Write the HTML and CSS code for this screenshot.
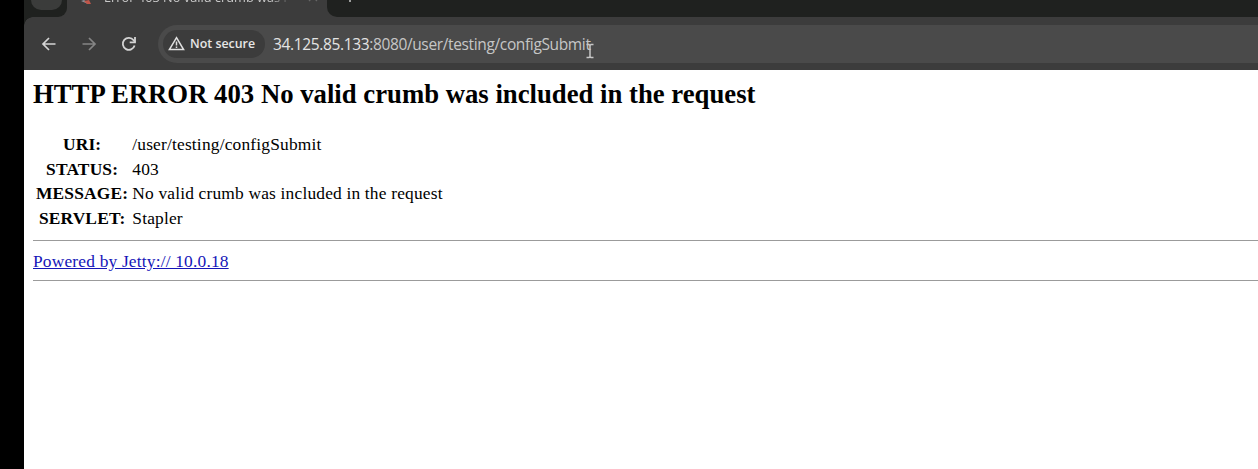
FILE: index.html
```html
<!DOCTYPE html>
<html lang="en">
<head>
<meta charset="utf-8">
<title>Error 403 No valid crumb was included in the request</title>
<link rel="stylesheet" href="styles.css">
</head>
<body>
<div class="window">
  <div class="tabstrip">
    <div class="strip-left"><div class="tab-search"></div></div>
    <div class="tab">
      <svg class="favicon" width="14" height="16" viewBox="0 0 14 16"><path d="M3 2h7v8H3z" fill="#d8b09a"/><path d="M2 12l3-1 5 3-1 1z" fill="#8b8f96"/><path d="M5 12l5-1 2 4H8z" fill="#c0564a"/></svg>
      <span class="tab-title">Error 403 No valid crumb was i</span>
      <svg class="tab-close" width="10" height="10" viewBox="0 0 10 10"><path d="M1 1l8 8M9 1L1 9" stroke="#666" stroke-width="1.3"/></svg>
    </div>
    <div class="strip-right">
      <svg width="12" height="12" viewBox="0 0 12 12"><path d="M6 0v12M0 6h12" stroke="#c8c8c8" stroke-width="1.5"/></svg>
    </div>
  </div>
  <div class="toolbar">
    <svg class="nav" width="16" height="16" viewBox="0 0 16 16" fill="none" stroke="#d4d4d4" stroke-width="1.7"><path d="M14.5 8H2.5M8 2L2 8l6 6"/></svg>
    <svg class="nav" width="16" height="16" viewBox="0 0 16 16" fill="none" stroke="#858585" stroke-width="1.7"><path d="M1.500 8h12M8 2l6 6-6 6"/></svg>
    <svg class="nav" width="16" height="16" viewBox="0 0 16 16" fill="none" stroke="#d4d4d4" stroke-width="1.8"><path d="M13.600 9.500A6 6 0 1 1 12.600 4.200L14 6"/><path d="M14 1v5.300H8.700"/></svg>
    <div class="omnibox">
      <div class="chip">
        <svg width="17" height="15" viewBox="0 0 17 15" fill="none" stroke="#e0e0e0" stroke-width="1.5"><path d="M8.500 1.600L15.600 13.600H1.400z"/><path d="M8.500 5.500v4M8.500 10.500v1.500"/></svg>
        <span class="chip-label">Not secure</span>
      </div>
      <div class="url"><span class="host">34.125.85.133</span>:8080/user/testing/configSubmit</div>
    </div>
  </div>
  <main class="page">
    <h2>HTTP ERROR 403 No valid crumb was included in the request</h2>
    <table>
      <tr><th>URI:</th><td>/user/testing/configSubmit</td></tr>
      <tr><th>STATUS:</th><td>403</td></tr>
      <tr><th>MESSAGE:</th><td>No valid crumb was included in the request</td></tr>
      <tr><th>SERVLET:</th><td>Stapler</td></tr>
    </table>
    <hr>
    <a href="#">Powered by Jetty:// 10.0.18</a>
    <hr>
  </main>
</div>
<svg class="cursor" width="8" height="16" viewBox="0 0 8 16"><path d="M.5 1.500H3L4 2.500 5 1.500H7.500M4 2.500v11M.5 14.500H3L4 13.500 5 14.500H7.500" fill="none" stroke="#c6c6c6" stroke-width="1.500"/></svg>
</body>
</html>
```
FILE: styles.css
```css
* { box-sizing: border-box; }
body { margin: 0; background: #000; overflow: hidden; }
.window { margin-left: 24px; height: 469px; background: #fff; }
.tabstrip { display: flex; height: 17px; background: #3c3c3c; overflow: hidden; }
.strip-left { width: 43px; padding-left: 7px; background: #1f211f; border-bottom-right-radius: 9px; }
.tab-search { width: 31px; height: 10px; background: #3b3c3b; border-radius: 0 0 10px 10px; }
.tab { display: flex; width: 260px; padding-left: 12px; color: #c9c9c9; }
.favicon { margin: -11px 11px 0 0; }
.tab-title { width: 188px; margin-top: -13px; overflow: hidden; white-space: nowrap; font: 12.8px/20px "Open Sans", "Noto Sans", sans-serif; -webkit-mask-image: linear-gradient(90deg, #000 88%, transparent); }
.tab-close { margin: -8px 0 0 16px; }
.strip-right { flex: 1; padding-left: 17px; background: #1f211f; border-bottom-left-radius: 10px; }
.strip-right svg { display: block; margin-top: -10px; }
.toolbar { display: flex; align-items: center; height: 53px; padding-left: 17px; background: radial-gradient(circle at 9px 9px, #3c3c3c 8.500px, #1f211f 9px) 0 0 / 9px 9px no-repeat, #3c3c3c; }
.nav { flex: none; margin-right: 24px; }
.omnibox { display: flex; flex: 1; align-items: center; height: 38px; margin-left: -3px; padding-left: 5px; background: #4a4a4a; border-radius: 19px 0 0 19px; }
.chip { display: flex; align-items: center; width: 102px; height: 28px; padding-left: 5px; background: #3c3c3c; border-radius: 14px; }
.chip svg { margin-right: 5px; }
.chip-label { color: #e6e6e6; font: 600 12.4px/18px "Open Sans", "Noto Sans", sans-serif; white-space: nowrap; }
.url { margin-left: 8px; color: #c6c6c6; font: 15.500px/22px "Open Sans", "Noto Sans", sans-serif; letter-spacing: -.36px; white-space: nowrap; }
.host { color: #e4e4e4; }
.page { padding: 9px 0 0 9px; color: #000; font: 17.400px/20px "Liberation Serif", "Times New Roman", serif; letter-spacing: .18px; }
h2 { margin: 0 0 22px; font-size: 26.720px; line-height: 30px; letter-spacing: 0; }
table { border-collapse: separate; border-spacing: 2px; }
th, td { padding: 1px; line-height: 20.500px; white-space: nowrap; }
th { text-align: center; }
hr { height: 1px; margin: 9px 0 9px; border: 0; background: #9b9b9b; }
a { width: max-content; color: #1515b8; display: block; line-height: 22px; text-decoration: underline; }
a + hr { margin-top: 8px; }
.cursor { position: absolute; left: 586px; top: 43px; }
```
